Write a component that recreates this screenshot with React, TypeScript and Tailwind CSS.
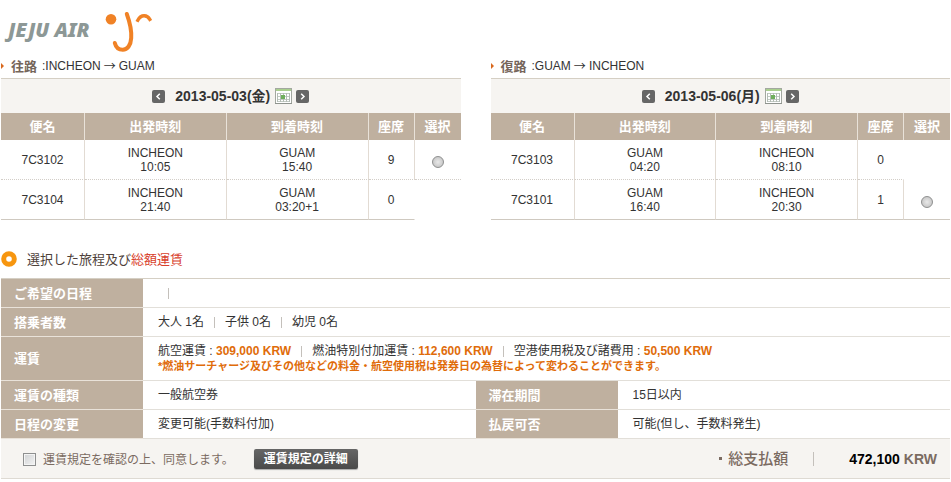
import React from "react";

type Flight = {
  no: string;
  from: string;
  dep: string;
  to: string;
  arr: string;
  seats: number;
};

const outbound: Flight[] = [
  { no: "7C3102", from: "INCHEON", dep: "10:05", to: "GUAM", arr: "15:40", seats: 9 },
  { no: "7C3104", from: "INCHEON", dep: "21:40", to: "GUAM", arr: "03:20+1", seats: 0 },
];

const inbound: Flight[] = [
  { no: "7C3103", from: "GUAM", dep: "04:20", to: "INCHEON", arr: "08:10", seats: 0 },
  { no: "7C3101", from: "GUAM", dep: "16:40", to: "INCHEON", arr: "20:30", seats: 1 },
];

const Logo = () => (
  <header className="flex h-14 items-center pt-2 pl-[7px]">
    <span className="w-24 pb-1 font-['Noto_Sans'] text-[20px] leading-none font-black whitespace-nowrap text-[#8d9896] italic">
      JEJU AIR
    </span>
    <svg className="h-11 w-12" viewBox="104 10 48 44" fill="none" aria-hidden="true">
      <circle cx="111" cy="19.3" r="5.3" fill="#f08226" />
      <path
        d="M126.8 14C129 20 131.8 29 131.2 38C130.8 45 127.5 49.8 122.8 49.8C118.5 49.8 115.8 47 114.8 43"
        stroke="#f08226"
        strokeWidth="4"
        strokeLinecap="round"
      />
      <path
        d="M137.8 20.3C139.6 17 142 15.7 144.3 15.8C146.8 15.9 148.6 17.3 149.8 19.3"
        stroke="#f08226"
        strokeWidth="3.4"
        strokeLinecap="square"
      />
    </svg>
  </header>
);

const ArrowButton = ({ label, d }: { label: string; d: string }) => (
  <button
    type="button"
    aria-label={label}
    className="flex size-[13px] items-center justify-center rounded-xs bg-[#666]"
  >
    <svg className="size-[13px]" viewBox="0 0 13 13" fill="none" aria-hidden="true">
      <path d={d} stroke="#fff" strokeWidth="1.5" />
    </svg>
  </button>
);

const CalendarIcon = () => (
  <svg className="h-4 w-[17px]" viewBox="0 0 17 16" aria-hidden="true">
    <rect x="0.5" y="0.5" width="16" height="15" fill="#fff" stroke="#a3a8a0" />
    <rect x="1" y="1" width="15" height="2" fill="#a9cf8e" />
    <path d="M2 5.5H15M2 8.5H15M2 11.5H15M2 13.5H15" stroke="#c3cbc4" />
    <path d="M2.5 5V14M5.5 5V14M8.5 5V14M11.5 5V14M14.5 5V14" stroke="#b4bdb5" />
    <rect x="6" y="7" width="4" height="4" fill="#6fae5c" />
    <path d="M0 15.5H17" stroke="#8f948e" />
  </svg>
);

const FlightTable = ({
  title,
  from,
  to,
  date,
  flights,
}: {
  title: string;
  from: string;
  to: string;
  date: string;
  flights: Flight[];
}) => (
  <section>
    <h2 className="flex h-[22px] items-center pb-0.5 text-xs leading-none">
      <svg className="mr-[7px] h-[6px] w-[3px]" viewBox="0 0 3 6" aria-hidden="true">
        <path d="M0 0L3 3L0 6Z" fill="#d9691e" />
      </svg>
      <b className="mr-[5px] text-[13px] text-[#75655a]">{title}</b>
      :{from}
      <span className="mx-[3px] font-['Noto_Sans_CJK_JP']">→</span>
      {to}
    </h2>
    <div className="flex h-[35px] items-center justify-center border-t border-[#d5cfc4] bg-[#f6f4f1]">
      <ArrowButton label="前の日" d="M7.8 3.7L5 6.5L7.8 9.3" />
      <b className="mr-[5px] ml-[10px] text-sm leading-none">{date}</b>
      <button type="button" aria-label="カレンダー" className="mr-1">
        <CalendarIcon />
      </button>
      <ArrowButton label="次の日" d="M5.2 3.7L8 6.5L5.2 9.3" />
    </div>
    <table className="w-full table-fixed border-separate border-spacing-0 text-center">
      <colgroup>
        <col className="w-[84px]" />
        <col />
        <col />
        <col className="w-[46px]" />
        <col className="w-[46px]" />
      </colgroup>
      <thead>
        <tr className="h-[27px] bg-[#bfb09f] text-[13px] leading-none text-white">
          <th className="border-r border-[#e9e2d9]">便名</th>
          <th className="border-r border-[#e9e2d9]">出発時刻</th>
          <th className="border-r border-[#e9e2d9]">到着時刻</th>
          <th className="border-r border-[#e9e2d9]">座席</th>
          <th>選択</th>
        </tr>
      </thead>
      <tbody className="text-xs leading-[14px]">
        {flights.map((f, i) => {
          const line =
            i === flights.length - 1
              ? "border-b border-b-[#cfc9c0]"
              : "border-b border-dotted border-b-[#d3cec8]";
          return (
            <tr key={f.no} className="h-10">
              <td className={`border-r border-r-[#e2dbd3] [border-right-style:solid] ${line}`}>
                {f.no}
              </td>
              <td className={`border-r border-r-[#e2dbd3] [border-right-style:solid] ${line}`}>
                {f.from}
                <br />
                {f.dep}
              </td>
              <td className={`border-r border-r-[#e2dbd3] [border-right-style:solid] ${line}`}>
                {f.to}
                <br />
                {f.arr}
              </td>
              <td
                className={`border-r [border-right-style:solid] ${
                  f.seats > 0 ? "border-r-[#e2dbd3]" : "border-r-white"
                } ${line}`}
              >
                {f.seats}
              </td>
              {f.seats > 0 ? (
                <td className={line}>
                  <input
                    type="radio"
                    name={title}
                    aria-label={f.no}
                    className="mx-auto mt-1 block size-3 appearance-none rounded-full border border-[#8e8f8f] bg-radial from-[#e9e9e9] to-[#bdbdbd]"
                  />
                </td>
              ) : (
                <td />
              )}
            </tr>
          );
        })}
      </tbody>
    </table>
  </section>
);

const Bar = () => (
  <span className="mx-[10px] inline-block h-[11px] w-px bg-[#c4c0bb] align-middle" />
);

const Price = ({ children }: { children: React.ReactNode }) => (
  <b className="text-[#e06c0a]">{children}</b>
);

const Label = ({ children }: { children: React.ReactNode }) => (
  <th
    scope="row"
    className="border-b border-[#e9e2d9] bg-[#bfb09f] pl-[13px] text-left text-[13px] leading-none text-white"
  >
    {children}
  </th>
);

const Value = ({ children, span }: { children: React.ReactNode; span?: number }) => (
  <td colSpan={span} className="border-b border-[#e2dfd9] pl-[15px]">
    {children}
  </td>
);

export default function App() {
  return (
    <div className="bg-white px-px font-['Liberation_Sans','Noto_Sans_CJK_JP',sans-serif] text-[#333]">
      <Logo />

      <div className="grid grid-cols-2 gap-[30px]">
        <FlightTable
          title="往路"
          from="INCHEON"
          to="GUAM"
          date="2013-05-03(金)"
          flights={outbound}
        />
        <FlightTable
          title="復路"
          from="GUAM"
          to="INCHEON"
          date="2013-05-06(月)"
          flights={inbound}
        />
      </div>

      <h2 className="mt-7 flex h-[22px] items-center text-[13px] leading-none text-[#4d4039]">
        <svg className="mr-[10px] size-4" viewBox="0 0 16 16" aria-hidden="true">
          <circle cx="8" cy="8" r="5.3" fill="none" stroke="#f7960f" strokeWidth="5" />
        </svg>
        選択した旅程及び<span className="text-[#d8402c]">総額運賃</span>
      </h2>

      <table className="mt-2 w-full table-fixed border-separate border-spacing-0 border-t border-[#d5cfc4] text-xs leading-[15px]">
        <colgroup>
          <col className="w-[142px]" />
          <col />
          <col className="w-[142px]" />
          <col />
        </colgroup>
        <tbody>
          <tr className="h-[29px]">
            <Label>ご希望の日程</Label>
            <Value span={3}>
              <Bar />
            </Value>
          </tr>
          <tr className="h-[29px]">
            <Label>搭乗者数</Label>
            <Value span={3}>
              大人 1名
              <Bar />
              子供 0名
              <Bar />
              幼児 0名
            </Value>
          </tr>
          <tr className="h-11">
            <Label>運賃</Label>
            <Value span={3}>
              <p>
                航空運賃 : <Price>309,000 KRW</Price>
                <Bar />
                燃油特別付加運賃 : <Price>112,600 KRW</Price>
                <Bar />
                空港使用税及び諸費用 : <Price>50,500 KRW</Price>
              </p>
              <p className="text-[11px]">
                <Price>
                  *燃油サーチャージ及びその他などの料金・航空使用税は発券日の為替によって変わることができます。
                </Price>
              </p>
            </Value>
          </tr>
          <tr className="h-[29px]">
            <Label>運賃の種類</Label>
            <Value>一般航空券</Value>
            <Label>滞在期間</Label>
            <Value>15日以内</Value>
          </tr>
          <tr className="h-[29px]">
            <Label>日程の変更</Label>
            <Value>変更可能(手数料付加)</Value>
            <Label>払戻可否</Label>
            <Value>可能(但し、手数料発生)</Value>
          </tr>
        </tbody>
      </table>

      <footer className="flex h-10 items-center border-b border-[#dedad3] bg-[#f6f4f1] pr-[13px] pl-[22px] text-[#7b6b61]">
        <label className="flex items-center gap-[7px] pt-0.5 text-xs">
          <input
            type="checkbox"
            className="size-[13px] appearance-none border border-[#8e8f8f] bg-linear-to-br from-[#cfd1d3] to-[#f4f4f4] shadow-[inset_0_0_0_1px_#f4f4f4]"
          />
          運賃規定を確認の上、同意します。
        </label>
        <button
          type="button"
          className="ml-5 h-5 rounded-xs bg-linear-to-b from-[#666] to-[#4a4a4a] px-[10px] text-xs leading-none font-bold text-white shadow-[0_1px_1px_#aaa]"
        >
          運賃規定の詳細
        </button>
        <p className="ml-auto flex items-center text-sm leading-none font-bold">
          <span className="mr-[6px] size-[3px] bg-[#7b6b61]" />
          <span className="text-[15px] font-medium">総支払額</span>
          <span className="mr-[35px] ml-[25px] h-[14px] w-px bg-[#c4c0bb]" />
          <span className="mr-1 text-black">472,100</span>
          KRW
        </p>
      </footer>
    </div>
  );
}
